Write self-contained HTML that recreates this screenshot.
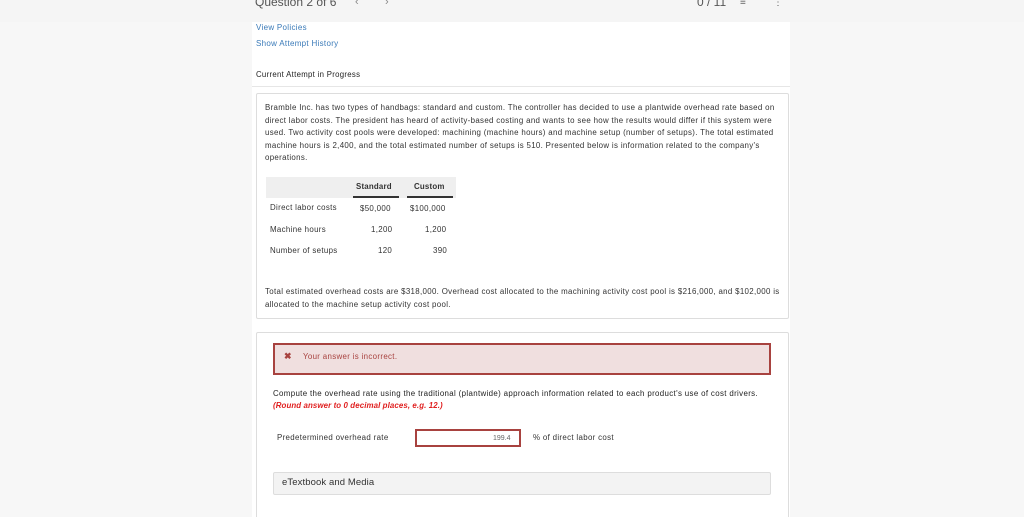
<!DOCTYPE html>
<html><head><style>
*{margin:0;padding:0;box-sizing:border-box}
html,body{width:1024px;height:517px;overflow:hidden}
body{background:#f7f7f7;font-family:"Liberation Sans",sans-serif;color:#333;position:relative;letter-spacing:0.3px}
.abs{position:absolute}
.main{left:252px;top:22px;width:538px;height:495px;background:#fff}
.card{position:absolute;left:256px;width:533px;background:#fff;border:1px solid #ddd;border-radius:2px}
.t{font-size:7.9px;line-height:12.6px;color:#333;letter-spacing:0.33px}
</style></head><body>
<div class="abs" style="left:0;top:0;width:1024px;height:22px;background:#f5f5f5"></div>
<div class="abs" style="left:255px;top:-5px;font-size:12px;color:#555;letter-spacing:0">Question 2 of 6</div>
<div class="abs" style="left:355px;top:-4px;font-size:11px;color:#888">&lsaquo;</div>
<div class="abs" style="left:385px;top:-4px;font-size:11px;color:#888">&rsaquo;</div>
<div class="abs" style="left:697px;top:-5px;font-size:12px;color:#555;letter-spacing:0">0 / 11</div>
<div class="abs" style="left:740px;top:-3px;font-size:10px;color:#666">&#8801;</div>
<div class="abs" style="left:773px;top:-3px;font-size:10px;color:#666">&#8942;</div>
<div class="abs main"></div>
<div class="abs" style="left:256px;top:23px;font-size:8px;color:#3a7ab8">View Policies</div>
<div class="abs" style="left:256px;top:39px;font-size:8px;color:#3a7ab8">Show Attempt History</div>
<div class="abs" style="left:256px;top:70px;font-size:7.8px;color:#222">Current Attempt in Progress</div>
<div class="abs" style="left:252px;top:86px;width:538px;height:1px;background:#e6e6e6"></div>

<div class="card" style="top:93px;height:226px">
 <div class="abs t" style="left:8px;top:8px;width:520px">Bramble Inc. has two types of handbags: standard and custom. The controller has decided to use a plantwide overhead rate based on direct labor costs. The president has heard of activity-based costing and wants to see how the results would differ if this system were used. Two activity cost pools were developed: machining (machine hours) and machine setup (number of setups). The total estimated machine hours is 2,400, and the total estimated number of setups is 510. Presented below is information related to the company's operations.</div>
 <div class="abs" style="left:9px;top:83px;width:190px;height:21px;background:#efefef"></div>
 <div class="abs t" style="left:99px;top:87px;font-weight:bold;color:#333;letter-spacing:0.2px">Standard</div>
 <div class="abs t" style="left:157px;top:87px;font-weight:bold;color:#333;letter-spacing:0.2px">Custom</div>
 <div class="abs" style="left:96px;top:102px;width:46px;height:1.5px;background:#333"></div>
 <div class="abs" style="left:150px;top:102px;width:46px;height:1.5px;background:#333"></div>
 <div class="abs t" style="left:13px;top:108px">Direct labor costs</div>
 <div class="abs t" style="left:103px;top:109px">$50,000</div>
 <div class="abs t" style="left:153px;top:109px">$100,000</div>
 <div class="abs t" style="left:114px;top:130px">1,200</div>
 <div class="abs t" style="left:13px;top:130px">Machine hours</div>
 <div class="abs t" style="left:168px;top:130px">1,200</div>
 <div class="abs t" style="left:13px;top:151px">Number of setups</div>
 <div class="abs t" style="left:121px;top:151px">120</div>
 <div class="abs t" style="left:176px;top:151px">390</div>
 <div class="abs t" style="left:8px;top:192px;width:516px">Total estimated overhead costs are $318,000. Overhead cost allocated to the machining activity cost pool is $216,000, and $102,000 is allocated to the machine setup activity cost pool.</div>
</div>

<div class="card" style="top:332px;height:190px">
 <div class="abs" style="left:16px;top:10px;width:498px;height:32px;background:#f0dfdf;border:2px solid #a8423f"></div>
 <div class="abs" style="left:27px;top:18px;font-size:9px;color:#a8423f;font-weight:bold">&#10006;</div>
 <div class="abs t" style="left:46px;top:18px;color:#a8423f">Your answer is incorrect.</div>
 <div class="abs t" style="left:16px;top:55px;color:#222;letter-spacing:0.35px">Compute the overhead rate using the traditional (plantwide) approach information related to each product's use of cost drivers.</div>
 <div class="abs t" style="left:16px;top:67px;color:#e02020;font-style:italic;font-weight:bold;letter-spacing:0.1px">(Round answer to 0 decimal places, e.g. 12.)</div>
 <div class="abs t" style="left:20px;top:99px">Predetermined overhead rate</div>
 <div class="abs" style="left:158px;top:96px;width:106px;height:18px;border:2px solid #a8423f;background:#fff"></div>
 <div class="abs" style="left:236px;top:102px;font-size:7px;color:#666;letter-spacing:0">199.4</div>
 <div class="abs t" style="left:276px;top:99px">% of direct labor cost</div>
 <div class="abs" style="left:16px;top:139px;width:498px;height:23px;background:#f3f3f3;border:1px solid #ddd;border-radius:2px"></div>
 <div class="abs" style="left:25px;top:144px;font-size:9.5px;color:#333;letter-spacing:0.1px">eTextbook and Media</div>
</div>
</body></html>
